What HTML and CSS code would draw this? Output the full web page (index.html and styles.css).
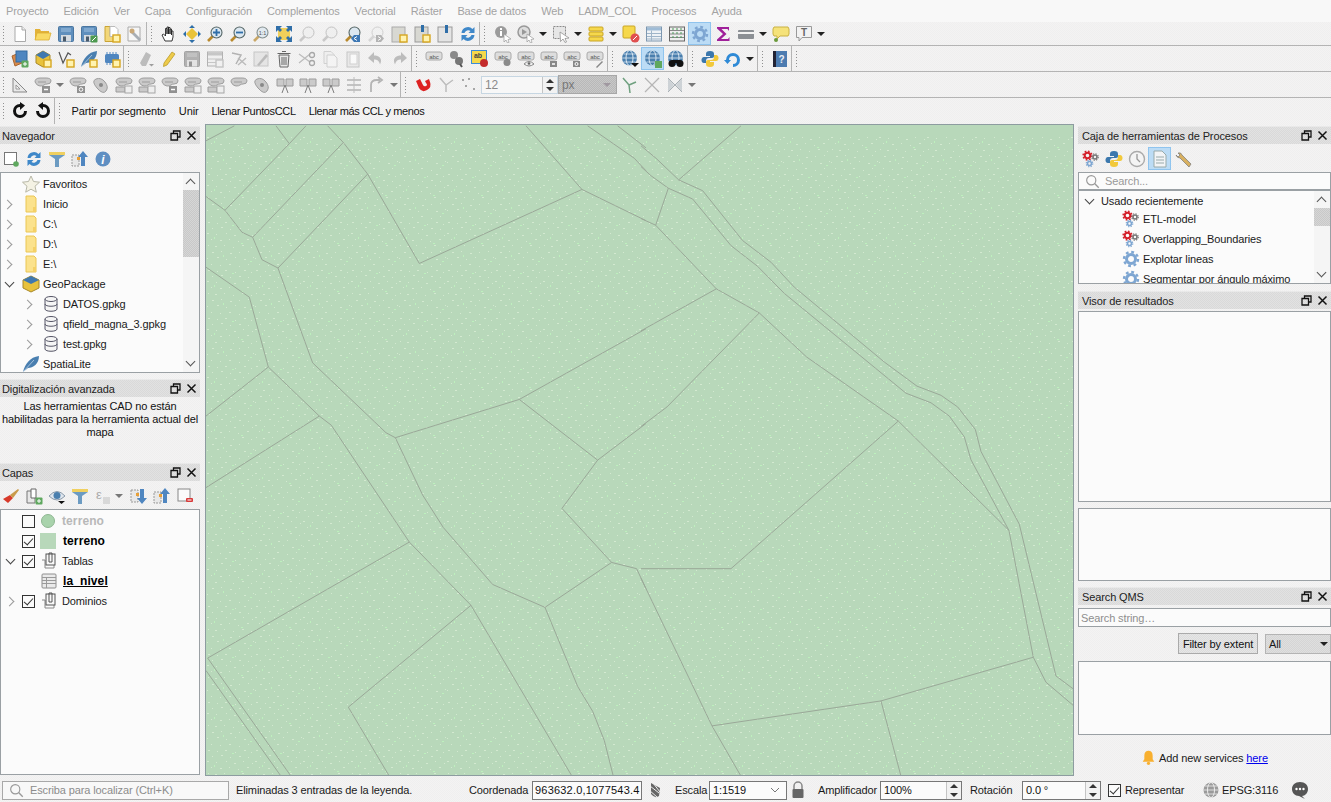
FILE: index.html
```html
<!DOCTYPE html>
<html lang="es">
<head>
  <meta charset="UTF-8" />
  <title>QGIS</title>
  <link rel="stylesheet" href="styles.css">
</head>
<body>

<!-- icon set -->
<svg class="defs" width="0" height="0">
  <symbol id="new" viewBox="0 0 18 18"><path d="M4 1.500h7l3.500 3.500v11.500H4z" fill="#fff" stroke="#a9a9a9"/><path d="M11 1.500V5h3.500" fill="#eee" stroke="#a9a9a9"/></symbol>
  <symbol id="open" viewBox="0 0 18 18"><path d="M1 15V4h5l1 2h8v3z" fill="#e2b239"/><path d="M1 15l2-7h14l-2 7z" fill="#f8d964" stroke="#dcae32" stroke-width=".8"/></symbol>
  <symbol id="save" viewBox="0 0 18 18"><rect x="1.500" y="1.500" width="15" height="15" rx="1" fill="#5f8fbd" stroke="#4a76a0"/><rect x="4" y="3" width="10" height="4" fill="#7fa8cf"/><rect x="4" y="10" width="10" height="6.500" fill="#d5dbe1"/><rect x="6" y="11.500" width="3" height="5" fill="#4a5a6a"/></symbol>
  <symbol id="badge" viewBox="0 0 18 18"><rect x="10" y="10" width="7" height="7" fill="#fff3b0" stroke="#d6a520" stroke-width="1.400"/></symbol>
  <symbol id="plus" viewBox="0 0 18 18"><rect x="10.500" y="10.500" width="7" height="7" rx="1" fill="#5fa85f"/><path d="M14 12v4M12 14h4" stroke="#fff"/></symbol>
  <symbol id="saveas" viewBox="0 0 18 18"><use href="#save"/><rect x="10.500" y="10.500" width="7" height="7" rx="1" fill="#4e9a50"/><path d="M12 16l4-4" stroke="#fff"/></symbol>
  <symbol id="layout" viewBox="0 0 18 18"><path d="M2 1.500h5v10h9v5H2z" fill="#f2d77a" stroke="#c9a435"/><path d="M7 1.500h5l3 3v7H7z" fill="#fff" stroke="#bbb"/><use href="#badge"/></symbol>
  <symbol id="layoutmgr" viewBox="0 0 18 18"><path d="M2 2h12v14H2z" fill="#f6f6f6" stroke="#aaa"/><path d="M7 6l8 8-2 2-8-8z" fill="#a7aeb5"/><circle cx="6" cy="6" r="2.500" fill="#c9a878"/></symbol>
  <symbol id="hand" viewBox="0 0 18 18"><path d="M5 16l-3-6 1.500-1 2 2V3.500h1.500V9V2h1.500v7V2.500H10V9V4h1.500v6V6H13v6l-1 4z" fill="#fff" stroke="#222" stroke-width=".9"/></symbol>
  <symbol id="pan" viewBox="0 0 18 18"><path d="M9 3l6 6-6 6-6-6z" fill="#e9c33a"/><path d="M9 0l3 3H6zM9 18l3-3H6zM0 9l3-3v6zM18 9l-3-3v6z" fill="#2f6ea8"/></symbol>
  <symbol id="mag" viewBox="0 0 18 18"><path d="M7 11l-5 5" stroke="#b98a2e" stroke-width="2.600"/><circle cx="10.500" cy="7.500" r="5.500" fill="#dbe7f0" stroke="#566" stroke-width="1.100"/></symbol>
  <symbol id="zin" viewBox="0 0 18 18"><use href="#mag"/><path d="M10.500 4v7M7 7.500h7" stroke="#2f6ea8" stroke-width="1.800"/></symbol>
  <symbol id="zout" viewBox="0 0 18 18"><use href="#mag"/><path d="M7 7.500h7" stroke="#2f6ea8" stroke-width="1.800"/></symbol>
  <symbol id="z11" viewBox="0 0 18 18"><g opacity=".7"><use href="#mag"/></g></symbol>
  <symbol id="zfull" viewBox="0 0 18 18"><path d="M3 3h12v12H3z" fill="#f0cf5a"/><path d="M1 1h6L5 3l2 2-2 2-2-2-2 2zM17 1h-6l2 2-2 2 2 2 2-2 2 2zM1 17h6l-2-2 2-2-2-2-2 2-2-2zM17 17h-6l2-2-2-2 2-2 2 2 2-2z" fill="#2f6ea8"/></symbol>
  <symbol id="zsel" viewBox="0 0 18 18"><g opacity=".55"><path d="M7 11l-5 5" stroke="#aaa" stroke-width="2.600"/><circle cx="10.500" cy="7.500" r="5.500" fill="#eee" stroke="#999"/></g></symbol>
  <symbol id="zlast" viewBox="0 0 18 18"><use href="#mag"/><path d="M16 10v7h-6l-3-3.500L10 10z" fill="#3d78b5"/><path d="M13 11.500l-3 2 3 2" stroke="#fff" fill="none"/></symbol>
  <symbol id="znext" viewBox="0 0 18 18"><g opacity=".7"><use href="#zsel"/><path d="M9 10h5l3 3.500-3 3.500H9z" fill="#9a9a9a"/><path d="M11 11.500l3 2-3 2" stroke="#fff" fill="none"/></g></symbol>
  <symbol id="bmnew" viewBox="0 0 18 18"><rect x="2" y="2" width="13" height="15" fill="#d8d8d2" stroke="#aaa"/><use href="#badge"/></symbol>
  <symbol id="bmshow" viewBox="0 0 18 18"><rect x="2" y="2" width="13" height="15" fill="#d8d8d2" stroke="#999"/><path d="M8 0h3v7H8z" fill="#2f6ea8"/><use href="#badge"/></symbol>
  <symbol id="bmlist" viewBox="0 0 18 18"><rect x="2" y="2" width="14" height="15" fill="#e4e4e4" stroke="#999"/><path d="M9 0h3v8H9z" fill="#2f6ea8"/></symbol>
  <symbol id="refresh" viewBox="0 0 18 18"><path d="M2.500 8a6.500 6.500 0 0 1 11-4l2-2v6h-6l2-2a4 4 0 0 0-6 2z" fill="#3f88c9"/><path d="M15.500 10a6.500 6.500 0 0 1-11 4l-2 2v-6h6l-2 2a4 4 0 0 0 6-2z" fill="#3f88c9"/></symbol>
  <symbol id="ident" viewBox="0 0 18 18"><circle cx="7" cy="7" r="6" fill="#9b9b9b"/><rect x="6" y="6" width="2" height="5" fill="#fff"/><rect x="6" y="3" width="2" height="2" fill="#fff"/><path d="M10 9l7 5-3 .5 1 3-1.500.5-1.500-3-2 2z" fill="#fff" stroke="#999" stroke-width=".7"/></symbol>
  <symbol id="action" viewBox="0 0 18 18"><circle cx="7" cy="7" r="6" fill="#ddd" stroke="#999" stroke-width="1.500"/><path d="M5 4l5 3-5 3z" fill="#999"/><path d="M10 9l7 5-3 .5 1 3-1.500.5-1.500-3-2 2z" fill="#fff" stroke="#999" stroke-width=".7"/></symbol>
  <symbol id="select" viewBox="0 0 18 18"><rect x="1.500" y="1.500" width="12" height="12" fill="#e6e6e6" stroke="#8a8a8a" stroke-dasharray="2 1"/><path d="M8 7l9 6-4 .5 1.500 3.500-1.500.5-2-3.500-2.500 2.500z" fill="#fff" stroke="#888" stroke-width=".7"/></symbol>
  <symbol id="stack" viewBox="0 0 18 18"><rect x="2" y="2" width="14" height="4" rx="1" fill="#f6d84c" stroke="#c9a525"/><rect x="2" y="7" width="14" height="4" rx="1" fill="#f6d84c" stroke="#c9a525"/><rect x="2" y="12" width="14" height="4" rx="1" fill="#f6d84c" stroke="#c9a525"/></symbol>
  <symbol id="desel" viewBox="0 0 18 18"><rect x="1" y="1" width="12" height="12" rx="1" fill="#f6d84c" stroke="#c9a525"/><circle cx="13" cy="13" r="4.500" fill="#e05050"/><path d="M11 15l4-4" stroke="#fff"/></symbol>
  <symbol id="attr" viewBox="0 0 18 18"><rect x="1.500" y="2" width="15" height="14" fill="#eef2f6" stroke="#7d97b0"/><rect x="2" y="2.500" width="14" height="3" fill="#9fbcd6"/><path d="M2 8.500h14M2 11.500h14M2 14h14M6.500 5.500V16" stroke="#9fb5c9"/></symbol>
  <symbol id="calc" viewBox="0 0 18 18"><rect x="1.500" y="2" width="15" height="14" fill="#eee" stroke="#666"/><path d="M2 5.500h14M2 9h14M2 12.500h14" stroke="#888"/><path d="M5 3v12M9 3v12M13 3v12" stroke="#4b9a58" stroke-dasharray="2 2"/></symbol>
  <symbol id="gear" viewBox="0 0 18 18"><circle cx="9" cy="9" r="4.500" fill="none" stroke="#7ea6d2" stroke-width="3"/><circle cx="9" cy="9" r="7" fill="none" stroke="#7ea6d2" stroke-width="2.400" stroke-dasharray="2.800 2.700"/></symbol>
  <symbol id="rgear" viewBox="0 0 18 18"><circle cx="5.500" cy="5.500" r="2.800" fill="none" stroke="#d4202a" stroke-width="2"/><circle cx="5.500" cy="5.500" r="4.400" fill="none" stroke="#d4202a" stroke-width="1.500" stroke-dasharray="1.700 1.750"/><circle cx="13" cy="7" r="2" fill="none" stroke="#777" stroke-width="1.600"/><circle cx="13" cy="7" r="3.300" fill="none" stroke="#777" stroke-width="1.100" stroke-dasharray="1.300 1.300"/><circle cx="7.500" cy="13.500" r="2" fill="none" stroke="#7ea6d2" stroke-width="1.600"/><circle cx="7.500" cy="13.500" r="3.300" fill="none" stroke="#7ea6d2" stroke-width="1.100" stroke-dasharray="1.300 1.300"/></symbol>
  <symbol id="sigma" viewBox="0 0 18 18"><path d="M3 2h12v4l-1.500-2H7.500l5 5-5.500 5h7l1.500-2v4H3v-1.500L9 9 3 3.500z" fill="#a0209a"/></symbol>
  <symbol id="measure" viewBox="0 0 18 18"><rect x="1" y="5" width="16" height="9" rx="1" fill="#8b8f94"/><rect x="1" y="7" width="16" height="2" fill="#f2f2f2"/></symbol>
  <symbol id="tip" viewBox="0 0 18 18"><path d="M2 2h14l1 2v5l-1 2H8l-3 3v-3H2l-1-2V4z" fill="#f5e27a" stroke="#c9b143"/><circle cx="4" cy="15" r="2" fill="#6a9a3a"/></symbol>
  <symbol id="textann" viewBox="0 0 18 18"><path d="M1.500 1.500h15v11H7l-3 3.500v-3.500H1.500z" fill="#f2f2f2" stroke="#999"/></symbol>
  <symbol id="dsm" viewBox="0 0 18 18"><path d="M1 6l7-3 3 10-7 3z" fill="#d98a4a" stroke="#a8642e"/><rect x="5" y="1" width="11" height="11" fill="#4f86c0" stroke="#356a9f"/><use href="#plus"/></symbol>
  <symbol id="gpkg" viewBox="0 0 18 18"><path d="M9 1l7 4v8l-7 4-7-4V5z" fill="#e8c23c" stroke="#a8892a"/><path d="M9 1l7 4-7 4-7-4z" fill="#3f78b0"/><use href="#badge"/></symbol>
  <symbol id="gpkgtree" viewBox="0 0 18 18"><path d="M9 1l8 4v8l-8 4-8-4V5z" fill="#e8c23c" stroke="#a8892a"/><path d="M9 1l8 4-8 4-8-4z" fill="#3f78b0"/></symbol>
  <symbol id="newvec" viewBox="0 0 18 18"><path d="M2 2l4 11 5-10 3 2" fill="none" stroke="#555" stroke-width="1.200"/><use href="#badge"/></symbol>
  <symbol id="feather" viewBox="0 0 18 18"><path d="M1 17C3 9 8 2 17 1c0 8-6 12-11 12z" fill="#4a7fb0"/><path d="M1 17l11-12" stroke="#cfe0ef" stroke-width=".7"/></symbol>
  <symbol id="feathernew" viewBox="0 0 18 18"><use href="#feather"/><use href="#badge"/></symbol>
  <symbol id="chip" viewBox="0 0 18 18"><rect x="2" y="4" width="14" height="9" rx="1.500" fill="#4f86c0"/><path d="M4 2v14M7 2v14M10 2v14M13 2v14" stroke="#4f86c0" stroke-dasharray="2 9"/><use href="#badge"/></symbol>
  <symbol id="edits" viewBox="0 0 18 18"><path d="M3 13L9 2l5 3-5 11H5z" fill="#9a9a9a"/><path d="M12 14h5l-2.500 2.500z" fill="#666"/></symbol>
  <symbol id="pencil" viewBox="0 0 18 18"><path d="M4 13L12 2l3 2-8 11-3.500 1.500z" fill="#eecb4a" stroke="#b99a2a" stroke-width=".8"/></symbol>
  <symbol id="edtable" viewBox="0 0 18 18"><rect x="1.500" y="2" width="15" height="14" fill="#eee" stroke="#888"/><rect x="2" y="2.500" width="14" height="3" fill="#aaa"/><path d="M2 9h14M2 12.500h14" stroke="#aaa"/><use href="#badge"/></symbol>
  <symbol id="addseg" viewBox="0 0 18 18"><path d="M3 3l9 2-5 9" fill="none" stroke="#888" stroke-width="1.500"/><path d="M9 8l8 7M17 8l-8 7" stroke="#8a9aa8" stroke-width="1.500"/></symbol>
  <symbol id="edline" viewBox="0 0 18 18"><rect x="2" y="2" width="14" height="14" fill="#ddd" stroke="#aaa"/><path d="M5 15L14 4l2 2-9 10z" fill="#999"/></symbol>
  <symbol id="trash" viewBox="0 0 18 18"><path d="M4 5h10l-1 12H5z" fill="#e8e8e8" stroke="#666"/><path d="M2.500 3.500h13M7 1.500h4M7 7v8M9 7v8M11 7v8" stroke="#666"/></symbol>
  <symbol id="cut" viewBox="0 0 18 18"><path d="M1 4l11 8M1 13l11-9" stroke="#999" stroke-width="1.300"/><circle cx="14" cy="13" r="2.500" fill="none" stroke="#777" stroke-width="1.300"/><circle cx="14" cy="5" r="2.500" fill="none" stroke="#777" stroke-width="1.300"/></symbol>
  <symbol id="copy" viewBox="0 0 18 18"><path d="M3 1.500h7l3 3v9H3z" fill="#eee" stroke="#bbb"/><path d="M6 5h7l3 3v9H6z" fill="#f6f6f6" stroke="#bbb"/></symbol>
  <symbol id="paste" viewBox="0 0 18 18"><rect x="3" y="2" width="12" height="15" fill="#e4e4e4" stroke="#aaa"/><rect x="6" y="4" width="7" height="10" fill="#fff" stroke="#bbb"/></symbol>
  <symbol id="undo" viewBox="0 0 18 18"><path d="M7 2L1 8l6 5V9.500c3 0 5 1 6 5 3-6-1-9-6-9z" fill="#9a9a9a"/></symbol>
  <symbol id="redo" viewBox="0 0 18 18"><path d="M11 2l6 6-6 5V9.500c-3 0-5 1-6 5-3-6 1-9 6-9z" fill="#9a9a9a"/></symbol>
  <symbol id="abc" viewBox="0 0 18 18"><rect x="1" y="2" width="16" height="8" rx="2" fill="#ddd" stroke="#aaa"/></symbol>
  <symbol id="abcpin" viewBox="0 0 18 18"><use href="#abc"/><circle cx="13" cy="12.500" r="3.500" fill="#8a8a8a"/></symbol>
  <symbol id="abceye" viewBox="0 0 18 18"><use href="#abc"/><path d="M7 14q5-5 10 0-5 4-10 0z" fill="#eee" stroke="#888"/><circle cx="12" cy="13.500" r="1.300" fill="#666"/></symbol>
  <symbol id="abcmove" viewBox="0 0 18 18"><use href="#abc"/><path d="M10 11h7v6h-7z" fill="#888"/><path d="M12 14h3" stroke="#fff" stroke-width="1.500"/></symbol>
  <symbol id="abcrot" viewBox="0 0 18 18"><use href="#abc"/><rect x="10" y="11" width="7" height="6" fill="#888"/><circle cx="13.500" cy="14" r="1.500" fill="none" stroke="#fff"/></symbol>
  <symbol id="abcedit" viewBox="0 0 18 18"><use href="#abc"/><path d="M10 17l6-6 1 1-6 6z" fill="#888"/></symbol>
  <symbol id="pins" viewBox="0 0 18 18"><circle cx="6" cy="5" r="4" fill="#8a8a8a"/><circle cx="11" cy="11" r="4" fill="#777"/><path d="M12 14l2 3" stroke="#555" stroke-width="2"/></symbol>
  <symbol id="labelactive" viewBox="0 0 18 18"><rect x=".5" y=".5" width="15" height="13" fill="#f5d94c" stroke="#3d8cd6"/><circle cx="13" cy="13" r="4" fill="#c42b2b"/></symbol>
  <symbol id="globe" viewBox="0 0 18 18"><circle cx="8.500" cy="8" r="7.500" fill="#4a7fae"/><ellipse cx="8.500" cy="8" rx="3.500" ry="7.500" fill="none" stroke="#dce8f2"/><path d="M1 8h15M2.500 4h12M2.500 12h12" stroke="#dce8f2" stroke-width=".8"/></symbol>
  <symbol id="wmsdown" viewBox="0 0 18 18"><use href="#globe"/><path d="M10 13h8l-4 4z" fill="#111"/></symbol>
  <symbol id="wmsgreen" viewBox="0 0 18 18"><use href="#globe"/><rect x="11" y="11" width="7" height="7" fill="#5fa85f"/></symbol>
  <symbol id="binoc" viewBox="0 0 18 18"><use href="#globe"/><circle cx="5" cy="13.500" r="3.500" fill="#111"/><circle cx="13" cy="13.500" r="3.500" fill="#111"/><rect x="5" y="10" width="8" height="3" fill="#111"/></symbol>
  <symbol id="python" viewBox="0 0 18 18"><path d="M9 1c-3 0-4 1-4 3v2h4v1H3c-2 0-2.500 2-2.500 3s.5 3 2.500 3h2v-2c0-2 1-3 3-3h3c1.500 0 2-1 2-2V4c0-2-1-3-4-3z" fill="#3c78ad"/><path d="M9 17c3 0 4-1 4-3v-2H9v-1h6c2 0 2.500-2 2.500-3s-.5-3-2.500-3h-2v2c0 2-1 3-3 3H7c-1.500 0-2 1-2 2v2c0 2 1 3 4 3z" fill="#f2c93b"/></symbol>
  <symbol id="update" viewBox="0 0 18 18"><path d="M2 10a7 7 0 1 1 7 7v-3a4 4 0 1 0-4-4h2l-3.500 4L0 10z" fill="#2f8ad6"/></symbol>
  <symbol id="help" viewBox="0 0 18 18"><rect x="2" y="1" width="14" height="16" fill="#4c7bb0"/><rect x="2" y="1" width="3" height="16" fill="#223"/></symbol>
  <symbol id="ruler" viewBox="0 0 18 18"><path d="M2 2l14 14H2z" fill="#e8e8e8" stroke="#777"/><path d="M5 9l4 4H5z" fill="#fff" stroke="#888"/></symbol>
  <symbol id="blob" viewBox="0 0 18 18"><path d="M1 6q0-4 5-4h6q5 0 5 3t-4 3q-2 0-3 1t-4 1-5-4z" fill="#c4c4c4" stroke="#8e8e8e"/><path d="M4 6h8" stroke="#8e8e8e"/></symbol>
  <symbol id="blobmove" viewBox="0 0 18 18"><use href="#blob"/><rect x="8" y="10" width="8" height="7" fill="#808080"/><path d="M10 13.500h4" stroke="#fff" stroke-width="1.500"/></symbol>
  <symbol id="blobrot" viewBox="0 0 18 18"><use href="#blob"/><rect x="8" y="10" width="8" height="7" fill="#808080"/><circle cx="12" cy="13.500" r="1.800" fill="none" stroke="#fff"/></symbol>
  <symbol id="blobdot" viewBox="0 0 18 18"><path d="M4 3q5-2 9 3t1 9-9-3-1-9z" fill="#c4c4c4" stroke="#8e8e8e"/><circle cx="9" cy="9" r="2" fill="#777"/></symbol>
  <symbol id="blobadd" viewBox="0 0 18 18"><use href="#blob"/><path d="M1 11h9v5H1z" fill="#c4c4c4" stroke="#8e8e8e"/><rect x="10" y="10" width="7" height="7" fill="#eee" stroke="#999"/></symbol>
  <symbol id="blobsplit" viewBox="0 0 18 18"><path d="M1 3h7v7H1zM10 3h7v7h-7z" fill="#c4c4c4" stroke="#8e8e8e"/><path d="M9 9l-3 8M9 9l3 8" stroke="#666"/></symbol>
  <symbol id="lines" viewBox="0 0 18 18"><path d="M2 4h14M2 9h14M2 14h14" stroke="#bbb" stroke-width="2"/><path d="M9 1v16" stroke="#9bb"/></symbol>
  <symbol id="curve" viewBox="0 0 18 18"><path d="M3 16V9q0-5 6-5h3M10 1l4 3-4 3" fill="none" stroke="#aaa" stroke-width="1.800"/></symbol>
  <symbol id="magnet" viewBox="0 0 18 18"><path d="M2 5l4-2 3 6q1 2 3 1t0-3l-1-2 4-2 1 3q2 5-3 8t-8-2z" fill="#dd2222"/></symbol>
  <symbol id="traceline" viewBox="0 0 18 18"><path d="M3 2l6 7 7-5M9 9v7" fill="none" stroke="#9bb" stroke-width="1.500"/></symbol>
  <symbol id="snapdots" viewBox="0 0 18 18"><g fill="#9a9a9a"><rect x="2" y="3" width="2" height="2"/><rect x="8" y="2" width="2" height="2"/><rect x="5" y="9" width="2" height="2"/><rect x="13" y="12" width="2" height="2"/></g></symbol>
  <symbol id="tripod" viewBox="0 0 18 18"><path d="M9 9L3 2M9 9l7-3M9 9l1 8" stroke="#6fa07f" stroke-width="1.500"/></symbol>
  <symbol id="cross" viewBox="0 0 18 18"><path d="M2 2l14 14M16 2L2 16" stroke="#b5b5b5" stroke-width="1.300"/></symbol>
  <symbol id="crossb" viewBox="0 0 18 18"><path d="M2 2l6 7-6 7zM16 2l-6 7 6 7z" fill="#cdd2d6"/><path d="M2 2l14 14M16 2L2 16" stroke="#a9b0b5"/></symbol>
  <symbol id="cw" viewBox="0 0 18 18"><path d="M9 2a7 7 0 1 0 7 7h-3a4 4 0 1 1-4-4v3l5-4.500L9 0z" fill="#111"/></symbol>
  <symbol id="ccw" viewBox="0 0 18 18"><path d="M9 2a7 7 0 1 1-7 7h3a4 4 0 1 0 4-4v3L4 3.500 9 0z" fill="#111"/></symbol>
  <symbol id="newdoc" viewBox="0 0 18 18"><rect x="2.500" y="2.500" width="12" height="12" fill="#fff" stroke="#777"/><circle cx="14" cy="14" r="2.800" fill="#5fa85f"/></symbol>
  <symbol id="filter" viewBox="0 0 18 18"><path d="M1 2h16v3l-6 4v8H7V9L1 5z" fill="#6c9bc2"/><rect x="1" y="2" width="16" height="3" fill="#f0d060"/></symbol>
  <symbol id="collapse" viewBox="0 0 18 18"><path d="M1 5h7v11H1z" fill="#e8e8e8" stroke="#999" stroke-dasharray="2 1"/><rect x="6" y="7" width="3" height="3" fill="#e8a038"/><path d="M12 1l5 6h-3v9h-4V7H7z" fill="#4f86c0"/></symbol>
  <symbol id="expand" viewBox="0 0 18 18"><path d="M1 3h7v12H1z" fill="#e8e8e8" stroke="#999" stroke-dasharray="2 1"/><rect x="6" y="6" width="3" height="3" fill="#e8a038"/><path d="M12 17l5-6h-3V2h-4v9H7z" fill="#4f86c0"/></symbol>
  <symbol id="info" viewBox="0 0 18 18"><circle cx="9" cy="9" r="7.500" fill="#5f8fc2"/></symbol>
  <symbol id="star" viewBox="0 0 18 18"><path d="M9 1l2.500 5.500 6 .7-4.500 4 1.300 6L9 14.200 3.700 17.200 5 11.200.5 7.200l6-.7z" fill="#f4f2e4" stroke="#b8b8a8"/></symbol>
  <symbol id="folder" viewBox="0 0 18 18"><path d="M4 1h8l2 2v14H4z" fill="#fbe28c" stroke="#eac654"/><path d="M11 12h3v5h-3z" fill="#f4d066"/></symbol>
  <symbol id="db" viewBox="0 0 18 18"><path d="M3 4v10c0 3 12 3 12 0V4" fill="#f5f5f5" stroke="#556"/><ellipse cx="9" cy="4" rx="6" ry="2.500" fill="#f5f5f5" stroke="#556"/><path d="M3 9c0 3 12 3 12 0" fill="none" stroke="#556"/></symbol>
  <symbol id="brush" viewBox="0 0 18 18"><path d="M1 12l7-4 3 3-5 5z" fill="#d83a2a"/><path d="M8 8l8-6 1 1-6 8z" fill="#c89a4a"/></symbol>
  <symbol id="addgroup" viewBox="0 0 18 18"><path d="M2 4h8v12H2z" fill="#e8e8e8" stroke="#777"/><path d="M6 2h5v9H6z" fill="#fff" stroke="#666"/><use href="#plus"/></symbol>
  <symbol id="eye" viewBox="0 0 18 18"><path d="M1 9q8-9 16 0-8 8-16 0z" fill="#dfe6ee" stroke="#8a9aaa"/><circle cx="9" cy="8.500" r="3.500" fill="#4a7fae"/><path d="M10 14h7l-3.500 3z" fill="#111"/></symbol>
  <symbol id="eps" viewBox="0 0 18 18"><rect x="9" y="10" width="7" height="7" fill="#d8d8d8"/></symbol>
  <symbol id="remove" viewBox="0 0 18 18"><rect x="2" y="2" width="12" height="12" fill="#fbfbfb" stroke="#888"/><rect x="10" y="11" width="7" height="4" rx="1" fill="#d83a3a"/><path d="M11.500 13h4" stroke="#fff"/></symbol>
  <symbol id="clock" viewBox="0 0 18 18"><circle cx="9" cy="9" r="7.500" fill="#f4f4f4" stroke="#aaa" stroke-width="1.400"/><path d="M9 4v5l3 3" fill="none" stroke="#999" stroke-width="1.300"/></symbol>
  <symbol id="scroll" viewBox="0 0 18 18"><path d="M3 1h8l4 4v12H3z" fill="#f2f4f6" stroke="#9aa"/><path d="M5 7h8M5 10h8M5 13h8" stroke="#9aa"/></symbol>
  <symbol id="wrench" viewBox="0 0 18 18"><path d="M2 5l2 2 2-2-2-2q3-1 4 2l9 9-2 3-9-9q-3 0-4-3z" fill="#d8b060" stroke="#777" stroke-width=".7"/></symbol>
  <symbol id="group" viewBox="0 0 18 18"><path d="M2 8h3v8h9v-3" fill="none" stroke="#888"/><rect x="6" y="2" width="9" height="11" fill="#f8f8f8" stroke="#555"/><path d="M9 2V1h3v1M9 2v8h3V2" fill="none" stroke="#555"/></symbol>
  <symbol id="tablelayer" viewBox="0 0 18 18"><rect x="2" y="2" width="14" height="14" rx="1" fill="#eaeaea" stroke="#8e8e8e"/><path d="M2 5.500h14M2 8.500h14M2 11.500h14M6.500 5.500V16" stroke="#9a9a9a"/></symbol>
  <symbol id="search" viewBox="0 0 18 18"><circle cx="7.500" cy="7.500" r="5.500" fill="none" stroke="#999" stroke-width="1.400"/><path d="M11.500 11.500l5 5" stroke="#999" stroke-width="1.600"/></symbol>
  <symbol id="mouse" viewBox="0 0 18 18"><path d="M5 2l9 5-1 8q-4 3-8-2z" fill="#666"/><path d="M4 5l9 7M3 9l8 7M7 2l7 9" stroke="#eee"/></symbol>
  <symbol id="lock" viewBox="0 0 18 18"><path d="M5 8V5a4 4 0 0 1 8 0v3" fill="none" stroke="#888" stroke-width="1.500"/><rect x="3.500" y="8" width="11" height="9" rx="1" fill="#666"/></symbol>
  <symbol id="crs" viewBox="0 0 18 18"><circle cx="9" cy="9" r="7.500" fill="#9a9a9a"/><ellipse cx="9" cy="9" rx="3.500" ry="7.500" fill="none" stroke="#eee"/><path d="M1.500 9h15M3 5h12M3 13h12" stroke="#eee" stroke-width=".8"/></symbol>
  <symbol id="chat" viewBox="0 0 18 18"><path d="M9 1c5 0 8 3 8 7s-3 7-6 7l3 3-6-3c-4 0-7-3-7-7s3-7 8-7z" fill="#555"/><circle cx="5.500" cy="8" r="1.200" fill="#fff"/><circle cx="9" cy="8" r="1.200" fill="#fff"/><circle cx="12.500" cy="8" r="1.200" fill="#fff"/></symbol>
  <symbol id="bell" viewBox="0 0 18 18"><path d="M9 1c3 0 5 2 5 6v4l2 3H2l2-3V7c0-4 2-6 5-6z" fill="#f8b030"/><circle cx="9" cy="16" r="2" fill="#f8b030"/></symbol>
  <symbol id="dockfloat" viewBox="0 0 11 11"><path d="M3.500 3V1h6.500v6H8M1 3.500h6.500V10H1z" fill="none" stroke="#111" stroke-width="1.300"/></symbol>
  <symbol id="dockclose" viewBox="0 0 11 11"><path d="M1.500 1.500l8 8M9.500 1.500l-8 8" stroke="#111" stroke-width="1.500"/></symbol>
</svg>

<div class="menubar">
  <span>Proyecto</span><span>Edición</span><span>Ver</span><span>Capa</span><span>Configuración</span><span>Complementos</span><span>Vectorial</span><span>Ráster</span><span>Base de datos</span><span>Web</span><span>LADM_COL</span><span>Procesos</span><span>Ayuda</span>
</div>

<div class="toolrow row1">
  <div class="tgroup line">
    <i class="grip tight"></i>
    <b class="tb"><svg class="ico"><use href="#new"/></svg></b>
    <b class="tb"><svg class="ico"><use href="#open"/></svg></b>
    <b class="tb"><svg class="ico"><use href="#save"/></svg></b>
    <b class="tb"><svg class="ico"><use href="#saveas"/></svg></b>
    <b class="tb"><svg class="ico"><use href="#layout"/></svg></b>
    <b class="tb"><svg class="ico"><use href="#layoutmgr"/></svg></b>
  </div>
  <div class="tgroup line">
    <i class="grip"></i>
    <b class="tb"><svg class="ico"><use href="#hand"/></svg></b>
    <b class="tb"><svg class="ico"><use href="#pan"/></svg></b>
    <b class="tb"><svg class="ico"><use href="#zin"/></svg></b>
    <b class="tb"><svg class="ico"><use href="#zout"/></svg></b>
    <b class="tb"><svg class="ico"><use href="#z11"/><text x="10.500" y="9.500" class="it t-11">1:1</text></svg></b>
    <b class="tb"><svg class="ico"><use href="#zfull"/></svg></b>
    <b class="tb"><svg class="ico"><use href="#zsel"/></svg></b>
    <b class="tb"><svg class="ico"><use href="#zsel"/></svg></b>
    <b class="tb"><svg class="ico"><use href="#zlast"/></svg></b>
    <b class="tb"><svg class="ico"><use href="#znext"/></svg></b>
    <b class="tb"><svg class="ico"><use href="#bmnew"/></svg></b>
    <b class="tb"><svg class="ico"><use href="#bmshow"/></svg></b>
    <b class="tb"><svg class="ico"><use href="#bmlist"/></svg></b>
    <b class="tb"><svg class="ico"><use href="#refresh"/></svg></b>
  </div>
  <div class="tgroup">
    <i class="grip wide"></i>
    <b class="tb"><svg class="ico"><use href="#ident"/></svg></b>
    <b class="tb"><svg class="ico"><use href="#action"/></svg></b><u class="drop"></u>
    <b class="tb"><svg class="ico"><use href="#select"/></svg></b><u class="drop"></u>
    <b class="tb"><svg class="ico"><use href="#stack"/></svg></b><u class="drop"></u>
    <b class="tb"><svg class="ico"><use href="#desel"/></svg></b>
    <b class="tb"><svg class="ico"><use href="#attr"/></svg></b>
    <b class="tb"><svg class="ico"><use href="#calc"/></svg></b>
    <b class="tb on"><svg class="ico"><use href="#gear"/></svg></b>
    <b class="tb"><svg class="ico"><use href="#sigma"/></svg></b>
    <b class="tb"><svg class="ico"><use href="#measure"/></svg></b><u class="drop"></u>
    <b class="tb"><svg class="ico"><use href="#tip"/></svg></b>
    <b class="tb"><svg class="ico"><use href="#textann"/><text x="9" y="10.500" class="it t-t">T</text></svg></b><u class="drop"></u>
  </div>
</div>

<div class="toolrow row2">
  <div class="tgroup line">
    <i class="grip tight"></i>
    <b class="tb"><svg class="ico"><use href="#dsm"/></svg></b>
    <b class="tb"><svg class="ico"><use href="#gpkg"/></svg></b>
    <b class="tb"><svg class="ico"><use href="#newvec"/></svg></b>
    <b class="tb"><svg class="ico"><use href="#feathernew"/></svg></b>
    <b class="tb"><svg class="ico"><use href="#chip"/></svg></b>
  </div>
  <div class="tgroup line pad">
    <i class="grip"></i>
    <b class="tb off"><svg class="ico"><use href="#edits"/></svg></b>
    <b class="tb"><svg class="ico"><use href="#pencil"/></svg></b>
    <b class="tb off"><svg class="ico"><use href="#save"/></svg></b>
    <b class="tb off"><svg class="ico"><use href="#edtable"/></svg></b>
    <b class="tb off"><svg class="ico"><use href="#addseg"/></svg></b>
    <b class="tb off"><svg class="ico"><use href="#edline"/></svg></b>
    <b class="tb"><svg class="ico"><use href="#trash"/></svg></b>
    <b class="tb off"><svg class="ico"><use href="#cut"/></svg></b>
    <b class="tb off"><svg class="ico"><use href="#copy"/></svg></b>
    <b class="tb off"><svg class="ico"><use href="#paste"/></svg></b>
    <b class="tb off"><svg class="ico"><use href="#undo"/></svg></b>
    <b class="tb off"><svg class="ico"><use href="#redo"/></svg></b>
  </div>
  <div class="tgroup line pad">
    <i class="grip"></i>
    <b class="tb"><svg class="ico"><use href="#abc"/><text x="9" y="8.500" class="it">abc</text></svg></b>
    <b class="tb"><svg class="ico"><use href="#pins"/></svg></b>
    <b class="tb"><svg class="ico"><use href="#labelactive"/><text x="7" y="8" class="it t-ab">ab</text></svg></b>
    <b class="tb"><svg class="ico"><use href="#abcpin"/><text x="9" y="8.500" class="it">abc</text></svg></b>
    <b class="tb"><svg class="ico"><use href="#abceye"/><text x="9" y="8.500" class="it">abc</text></svg></b>
    <b class="tb"><svg class="ico"><use href="#abcmove"/><text x="9" y="8.500" class="it">abc</text></svg></b>
    <b class="tb"><svg class="ico"><use href="#abcrot"/><text x="9" y="8.500" class="it">abc</text></svg></b>
    <b class="tb"><svg class="ico"><use href="#abcedit"/><text x="9" y="8.500" class="it">abc</text></svg></b>
  </div>
  <div class="tgroup line">
    <i class="grip"></i>
    <b class="tb"><svg class="ico"><use href="#wmsdown"/></svg></b>
    <b class="tb on"><svg class="ico"><use href="#wmsgreen"/></svg></b>
    <b class="tb"><svg class="ico"><use href="#binoc"/></svg></b>
  </div>
  <div class="tgroup line pad">
    <i class="grip"></i>
    <b class="tb"><svg class="ico"><use href="#python"/></svg></b>
    <b class="tb"><svg class="ico"><use href="#update"/></svg></b><u class="drop"></u>
  </div>
  <div class="tgroup line">
    <i class="grip"></i>
    <b class="tb"><svg class="ico"><use href="#help"/><text x="10.500" y="13" class="it t-help">?</text></svg></b>
  </div>
  <div class="tgroup"><i class="grip"></i></div>
</div>

<div class="toolrow row3">
  <div class="tgroup line">
    <i class="grip tight"></i>
    <b class="tb off"><svg class="ico"><use href="#ruler"/></svg></b>
    <b class="tb off"><svg class="ico"><use href="#blobmove"/></svg></b><u class="drop grey"></u>
    <b class="tb off"><svg class="ico"><use href="#blobrot"/></svg></b>
    <b class="tb off"><svg class="ico"><use href="#blobdot"/></svg></b>
    <b class="tb off"><svg class="ico"><use href="#blobadd"/></svg></b>
    <b class="tb off"><svg class="ico"><use href="#blobadd"/></svg></b>
    <b class="tb off"><svg class="ico"><use href="#blobmove"/></svg></b>
    <b class="tb off"><svg class="ico"><use href="#blobadd"/></svg></b>
    <b class="tb off"><svg class="ico"><use href="#blobadd"/></svg></b>
    <b class="tb off"><svg class="ico"><use href="#blob"/></svg></b>
    <b class="tb off"><svg class="ico"><use href="#blobdot"/></svg></b>
    <b class="tb off"><svg class="ico"><use href="#blobsplit"/></svg></b>
    <b class="tb off"><svg class="ico"><use href="#blobsplit"/></svg></b>
    <b class="tb off"><svg class="ico"><use href="#blobsplit"/></svg></b>
    <b class="tb off"><svg class="ico"><use href="#lines"/></svg></b>
    <b class="tb off"><svg class="ico"><use href="#curve"/></svg></b><u class="drop grey"></u>
  </div>
  <div class="tgroup">
    <i class="grip"></i>
    <b class="tb"><svg class="ico"><use href="#magnet"/></svg></b>
    <b class="tb off"><svg class="ico"><use href="#traceline"/></svg></b>
    <b class="tb off"><svg class="ico"><use href="#snapdots"/></svg></b>
    <div class="snap-spin"><span>12</span><em class="spin"></em></div>
    <div class="snap-unit"><span>px</span><u class="drop pale"></u></div>
    <b class="tb"><svg class="ico"><use href="#tripod"/></svg></b>
    <b class="tb"><svg class="ico"><use href="#cross"/></svg></b>
    <b class="tb"><svg class="ico"><use href="#crossb"/></svg></b><u class="drop grey"></u>
  </div>
</div>

<div class="toolrow row4">
  <div class="tgroup line">
    <i class="grip tight"></i>
    <b class="tb"><svg class="ico"><use href="#cw"/></svg></b>
    <b class="tb"><svg class="ico"><use href="#ccw"/></svg></b>
  </div>
  <div class="tgroup">
    <i class="grip"></i>
    <span class="act">Partir por segmento</span><span class="act">Unir</span><span class="act narrow">Llenar PuntosCCL</span><span class="act narrow">Llenar más CCL y menos</span>
  </div>
</div>

<div class="main">

  <aside class="dock left">
    <section class="panel">
      <div class="dock-title"><span>Navegador</span><svg class="dock-btn"><use href="#dockfloat"/></svg><svg class="dock-btn"><use href="#dockclose"/></svg></div>
      <div class="dock-bar">
        <svg class="ico"><use href="#newdoc"/></svg>
        <svg class="ico"><use href="#refresh"/></svg>
        <svg class="ico"><use href="#filter"/></svg>
        <svg class="ico"><use href="#collapse"/></svg>
        <svg class="ico"><use href="#info"/><text x="9" y="13.500" class="it t-i">i</text></svg>
      </div>
      <div class="tree nav-tree">
        <div class="rows">
          <div class="row"><i class="tw"></i><svg class="ico"><use href="#star"/></svg><span>Favoritos</span></div>
          <div class="row"><i class="tw r"></i><svg class="ico"><use href="#folder"/></svg><span>Inicio</span></div>
          <div class="row"><i class="tw r"></i><svg class="ico"><use href="#folder"/></svg><span>C:\</span></div>
          <div class="row"><i class="tw r"></i><svg class="ico"><use href="#folder"/></svg><span>D:\</span></div>
          <div class="row"><i class="tw r"></i><svg class="ico"><use href="#folder"/></svg><span>E:\</span></div>
          <div class="row"><i class="tw d"></i><svg class="ico"><use href="#gpkgtree"/></svg><span>GeoPackage</span></div>
          <div class="row sub"><i class="tw r"></i><svg class="ico"><use href="#db"/></svg><span>DATOS.gpkg</span></div>
          <div class="row sub"><i class="tw r"></i><svg class="ico"><use href="#db"/></svg><span>qfield_magna_3.gpkg</span></div>
          <div class="row sub"><i class="tw r"></i><svg class="ico"><use href="#db"/></svg><span>test.gpkg</span></div>
          <div class="row"><i class="tw"></i><svg class="ico"><use href="#feather"/></svg><span>SpatiaLite</span></div>
        </div>
        <div class="scrollbar"><i class="up"></i><i class="thumb nav-thumb"></i><i class="rest"></i><i class="down"></i></div>
      </div>
    </section>

    <section class="panel cad">
      <div class="dock-title"><span>Digitalización avanzada</span><svg class="dock-btn"><use href="#dockfloat"/></svg><svg class="dock-btn"><use href="#dockclose"/></svg></div>
      <p class="cad-msg">Las herramientas CAD no están habilitadas para la herramienta actual del mapa</p>
    </section>

    <section class="panel layers">
      <div class="dock-title"><span>Capas</span><svg class="dock-btn"><use href="#dockfloat"/></svg><svg class="dock-btn"><use href="#dockclose"/></svg></div>
      <div class="dock-bar layer-bar">
        <svg class="ico"><use href="#brush"/></svg>
        <svg class="ico"><use href="#addgroup"/></svg>
        <svg class="ico"><use href="#eye"/></svg>
        <svg class="ico"><use href="#filter"/></svg>
        <svg class="ico"><use href="#eps"/><text x="2" y="12" class="it t-eps">ε</text></svg><u class="drop grey"></u>
        <svg class="ico"><use href="#expand"/></svg>
        <svg class="ico"><use href="#collapse"/></svg>
        <svg class="ico"><use href="#remove"/></svg>
      </div>
      <div class="tree layer-tree">
        <div class="lrow"><i class="tw"></i><i class="check"></i><i class="sym-circle"></i><span class="dim">terreno</span></div>
        <div class="lrow"><i class="tw"></i><i class="check yes"></i><i class="sym-fill"></i><span class="bold">terreno</span></div>
        <div class="lrow"><i class="tw d"></i><i class="check yes"></i><svg class="ico"><use href="#group"/></svg><span class="grp">Tablas</span></div>
        <div class="lrow"><i class="tw"></i><i class="check none"></i><svg class="ico"><use href="#tablelayer"/></svg><span class="bold ul">la_nivel</span></div>
        <div class="lrow"><i class="tw r"></i><i class="check yes"></i><svg class="ico"><use href="#group"/></svg><span class="grp">Dominios</span></div>
      </div>
    </section>
  </aside>

  <div class="map">
    <svg class="map-svg">
      <defs>
        <pattern id="dots" width="48" height="48" patternUnits="userSpaceOnUse">
          <path fill="#d3e9d0" d="M2 1h2v1H2zM11 2h1v1h-1zM19 1h2v1h-2zM29 3h1v1h-1zM38 1h2v1h-2zM45 3h1v1h-1zM6 7h1v1H6zM15 6h2v1h-2zM24 8h1v1h-1zM33 7h2v1h-2zM42 8h1v1h-1zM1 12h2v1H1zM10 13h1v1h-1zM20 12h1v1h-1zM28 14h2v1h-2zM37 12h1v1h-1zM46 14h1v1h-1zM5 18h1v1H5zM14 19h2v1h-2zM23 18h1v1h-1zM32 20h1v1h-1zM41 18h2v1h-2zM2 24h1v1H2zM9 25h2v1H9zM18 24h1v1h-1zM27 26h1v1h-1zM36 24h2v1h-2zM45 26h1v1h-1zM6 31h2v1H6zM15 30h1v1h-1zM24 32h2v1h-2zM33 31h1v1h-1zM42 30h1v1h-1zM1 37h1v1H1zM11 36h2v1h-2zM20 38h1v1h-1zM29 36h1v1h-1zM38 38h2v1h-2zM47 36h1v1h-1zM5 43h1v1H5zM14 44h1v1h-1zM23 43h2v1h-2zM33 45h1v1h-1zM42 43h1v1h-1z"/>
          <path fill="#bdf0bd" d="M26 4h2v1h-2zM8 16h1v2H8zM35 22h2v1h-2zM17 34h1v2h-1zM44 40h2v1h-2z"/>
        </pattern>
      </defs>
      <rect y="11" width="100%" height="100%" fill="url(#dots)"/>
      <g class="parcels" transform="scale(.3333 .41582)">
        <path d="M0 38L85 2M210 2l40 43M300 2L250 45 57 205 0 172"/>
        <path d="M57 205l51 53 32 12 28 54 48 20 104 228 220 168 28 12 82 138 62 78 148 137 157 55 98 190 45 60 35 70 27 86"/>
        <path d="M365 2l47 40 73 76 155 215 488-178L960 2M412 42L140 270M485 118L216 344"/>
        <path d="M0 342l130 72 57 168 153 118 36 22 234 281 185 152 303 411M187 582L0 700M340 700L0 872"/>
        <path d="M610 1003L5 1282l250 284M0 1312l225 254M795 1155L427 1400l123 166"/>
        <path d="M568 752l372-92 380-170M940 660l235 146-107 116 149 130 75 15M1175 806l145-88M1217 1052l-200 108M1128 155l192 75"/>
        <path d="M1145 2l140 78 35 30M1235 2l85 53M1292 1067l28 48"/>
      </g>
      <g class="parcels" transform="translate(435 0) scale(.3333 .41582)">
        <path d="M0 100l30 22 52 30 73 26 115 112 80 50 80 65 190 125 175 115 75 23 55 32 45 50 20 55 114 170 73 305 38 60 85 58"/>
        <path d="M0 50l45 30 68 52 72 26 120 120 85 52 70 60 270 180 98 58 72 22 50 28 53 54 17 53 115 175 110 365 55 33"/>
        <path d="M300 2L113 132M82 152L44 241l182 153 129 58 142 106 275 154 332 263M0 225l44 16M0 495l226-101M0 725l78-47 277-226"/>
        <path d="M0 1067h270l502-355M0 1090l213 355 87 121M213 1445l507-60 457-105M720 1385l60 181"/>
      </g>
    </svg>
  </div>

  <aside class="dock right">
    <section class="panel">
      <div class="dock-title"><span>Caja de herramientas de Procesos</span><svg class="dock-btn"><use href="#dockfloat"/></svg><svg class="dock-btn"><use href="#dockclose"/></svg></div>
      <div class="dock-bar proc-bar">
        <b class="tb"><svg class="ico"><use href="#rgear"/></svg></b>
        <b class="tb"><svg class="ico"><use href="#python"/></svg></b>
        <b class="tb"><svg class="ico"><use href="#clock"/></svg></b>
        <b class="tb on"><svg class="ico"><use href="#scroll"/></svg></b>
        <b class="tb"><svg class="ico"><use href="#wrench"/></svg></b>
      </div>
      <div class="search-box"><svg class="ico small"><use href="#search"/></svg><span>Search...</span></div>
      <div class="tree proc-tree">
        <div class="rows">
          <div class="row head"><i class="tw d"></i><span>Usado recientemente</span></div>
          <div class="row alg"><svg class="ico"><use href="#rgear"/></svg><span>ETL-model</span></div>
          <div class="row alg"><svg class="ico"><use href="#rgear"/></svg><span>Overlapping_Boundaries</span></div>
          <div class="row alg"><svg class="ico"><use href="#gear"/></svg><span>Explotar lineas</span></div>
          <div class="row alg"><svg class="ico"><use href="#gear"/></svg><span>Segmentar por ángulo máximo</span></div>
        </div>
        <div class="scrollbar"><i class="up"></i><i class="thumb proc-thumb"></i><i class="rest"></i><i class="down"></i></div>
      </div>
    </section>

    <section class="panel results">
      <div class="dock-title"><span>Visor de resultados</span><svg class="dock-btn"><use href="#dockfloat"/></svg><svg class="dock-btn"><use href="#dockclose"/></svg></div>
      <div class="box box-big"></div>
      <div class="box box-small"></div>
    </section>

    <section class="panel qms">
      <div class="dock-title"><span>Search QMS</span><svg class="dock-btn"><use href="#dockfloat"/></svg><svg class="dock-btn"><use href="#dockclose"/></svg></div>
      <div class="qms-input">Search string…</div>
      <div class="qms-filter"><span class="btn">Filter by extent</span><span class="combo"><span>All</span><u class="drop"></u></span></div>
      <div class="box box-qms"></div>
      <div class="qms-add"><svg class="ico small"><use href="#bell"/></svg><span>Add new services <a href="#">here</a></span></div>
    </section>
  </aside>

</div>

<footer class="status">
  <div class="locator"><svg class="ico small"><use href="#search"/></svg><span>Escriba para localizar (Ctrl+K)</span></div>
  <span class="msg">Eliminadas 3 entradas de la leyenda.</span>
  <span class="lab coord-lab">Coordenada</span>
  <span class="field coord">963632.0,1077543.4</span>
  <svg class="ico st-mouse"><use href="#mouse"/></svg>
  <span class="lab scale-lab">Escala</span>
  <span class="field scale"><span>1:1519</span><svg class="chev" viewBox="0 0 10 6"><path d="M1 1l4 4 4-4" fill="none" stroke="#777"/></svg></span>
  <svg class="ico st-lock"><use href="#lock"/></svg>
  <span class="lab amp-lab">Amplificador</span>
  <span class="field amp"><span>100%</span><em class="spin"></em></span>
  <span class="lab rot-lab">Rotación</span>
  <span class="field rot"><span>0.0 °</span><em class="spin"></em></span>
  <i class="check yes st-check"></i>
  <span class="lab rend-lab">Representar</span>
  <svg class="ico st-crs"><use href="#crs"/></svg>
  <span class="lab crs-lab">EPSG:3116</span>
  <svg class="ico st-chat"><use href="#chat"/></svg>
</footer>

</body>
</html>
```

FILE: styles.css
```css
* {
  box-sizing: border-box;
}

html, body {
  margin: 0;
  height: 802px;
  overflow: hidden;
}

body {
  display: flex;
  flex-direction: column;
  width: 1331px;
  font-family: "Liberation Sans", Arial, sans-serif;
  font-size: 11px;
  letter-spacing: -.12px;
  color: #1a1a1a;
  background: repeating-conic-gradient(#f4f3f3 0 25%, #efefef 0 50%) 0 0 / 2px 2px;
}

.defs {
  position: absolute;
}

.ico {
  width: 18px;
  height: 18px;
  flex: none;
  display: block;
}

.ico.small {
  width: 15px;
  height: 15px;
}

/* text that sits inside icons */
.it {
  font-size: 6px;
  letter-spacing: 0;
  text-anchor: middle;
  fill: #555;
}

.t-11 { font-size: 5.500px; fill: #555; }
.t-t { font-size: 10px; font-weight: 700; fill: #666; }
.t-ab { font-size: 7px; font-weight: 700; fill: #444; }
.t-help { font-size: 10px; font-weight: 700; fill: #e8eef5; }
.t-i { font-size: 12px; font-weight: 700; font-style: italic; fill: #fff; }
.t-eps { font-size: 13px; text-anchor: start; fill: #aaa; }

/* menu */
.menubar {
  height: 22px;
  display: flex;
  align-items: center;
  gap: 15px;
  padding-left: 6px;
  color: #a3a3a3;
  background: #f8f8f8;
}

/* toolbars */
.toolrow {
  display: flex;
  border-bottom: 1px solid #b4b4b4;
  flex: none;
}

.row1 { height: 24px; }
.row2, .row3 { height: 26px; }
.row4 { height: 26px; border-bottom: 0; }

.tgroup {
  display: flex;
  align-items: center;
  height: 100%;
}

.tgroup.line {
  border-right: 1px solid #b4b4b4;
}

.tgroup.pad {
  padding-right: 1px;
}

.grip {
  width: 10px;
  height: 18px;
  flex: none;
  background: radial-gradient(circle, #8f8f8f 0 .8px, transparent 1px) 3px 0 / 3px 3px repeat-y;
}

.grip.tight { width: 8px; background-position: 2px 0; }
.grip.wide { width: 11px; }

.tb {
  width: 23px;
  height: 23px;
  flex: none;
  display: flex;
  align-items: center;
  justify-content: center;
  font-weight: normal;
}

.tb.on {
  background: #bcdcf5;
  outline: 1px solid #8fc4ee;
  outline-offset: -1px;
}

.tb.off .ico {
  filter: grayscale(1);
  opacity: .6;
}

.row3 .tb.off .ico { opacity: .85; }

.drop {
  width: 12px;
  flex: none;
  display: flex;
  align-items: center;
  justify-content: center;
  text-decoration: none;
}

.drop::after {
  content: "";
  border-left: 4px solid transparent;
  border-right: 4px solid transparent;
  border-top: 4px solid #222;
}

.drop.grey::after { border-top-color: #777; }
.drop.pale::after { border-top-color: #a098a0; }

.snap-spin {
  width: 77px;
  height: 18px;
  margin-left: 1px;
  display: flex;
  align-items: center;
  justify-content: space-between;
  padding-left: 3px;
  border: 1px solid #c6d6e2;
  background: #f7f7f7;
  color: #8a8a8a;
  font-size: 12px;
}

.snap-unit {
  width: 59px;
  height: 19px;
  display: flex;
  align-items: center;
  justify-content: space-between;
  padding: 0 3px;
  border: 1px solid #a8a8a8;
  background: repeating-conic-gradient(#c8c8c8 0 25%, #b8b8b8 0 50%) 0 0 / 2px 2px;
  color: #777;
  font-size: 12px;
}

.spin {
  width: 15px;
  height: 100%;
  flex: none;
  position: relative;
  border-left: 1px solid #c4c4c4;
  background: #f2f2f2;
}

.spin::before, .spin::after {
  content: "";
  position: absolute;
  left: 3px;
  border-left: 4px solid transparent;
  border-right: 4px solid transparent;
}

.spin::before { top: 2px; border-bottom: 4px solid #333; }
.spin::after { bottom: 2px; border-top: 4px solid #333; }

.act {
  padding: 0 6.500px;
  color: #111;
}

.act.narrow {
  letter-spacing: -.36px;
}

/* main area */
.main {
  height: 652px;
  display: flex;
  flex: none;
}

.map {
  width: 869px;
  margin-left: 5px;
  margin-right: 4px;
  border: 1px solid #8d9ca0;
  background: #b8d8ba;
  overflow: hidden;
}

.map-svg {
  display: block;
  width: 100%;
  height: 100%;
}

.parcels path {
  fill: none;
  stroke: #9aa898;
  stroke-width: 1;
  vector-effect: non-scaling-stroke;
}

.dock {
  display: flex;
  flex-direction: column;
  flex: none;
  padding-top: 2px;
}

.dock.left { width: 200px; }
.dock.right { width: 253px; }

.panel {
  display: flex;
  flex-direction: column;
}

.dock-title {
  height: 18px;
  flex: none;
  display: flex;
  align-items: center;
  gap: 5px;
  padding: 0 3px 0 2px;
  background: repeating-conic-gradient(#e2e2e2 0 25%, #d9d9d9 0 50%) 0 0 / 2px 2px;
  border-top: 1px solid #e9e9e9;
  color: #222;
}

.right .dock-title { padding-left: 4px; }

.dock-title span {
  flex: 1;
}

.dock-btn {
  width: 11px;
  height: 11px;
  flex: none;
}

.dock-bar {
  height: 28px;
  flex: none;
  display: flex;
  align-items: center;
  gap: 5px;
  padding: 1px 0 0 2px;
}

.tree {
  background: #fbfbfb;
  border: 1px solid #9aa0a4;
  display: flex;
  overflow: hidden;
}

.rows {
  flex: 1;
  padding-top: 1px;
  min-width: 0;
}

.row {
  height: 20px;
  display: flex;
  align-items: center;
  white-space: nowrap;
}

.row > span {
  margin-left: 3px;
}

.tw {
  width: 21px;
  height: 8px;
  flex: none;
  display: block;
  position: relative;
}

.tw.r::after, .tw.d::after {
  content: "";
  position: absolute;
  width: 6px;
  height: 6px;
  border-right: 1.500px solid #9a9a9a;
  border-bottom: 1.500px solid #9a9a9a;
}

.tw.r::after { left: 3px; top: 1px; transform: rotate(-45deg); }
.tw.d::after { left: 5px; top: -1px; transform: rotate(45deg); border-color: #444; }

.nav-tree {
  height: 201px;
  width: 200px;
}

.sub {
  padding-left: 20px;
}

.scrollbar {
  width: 16px;
  flex: none;
  display: flex;
  flex-direction: column;
  background: #f5f5f5;
}

.scrollbar .up, .scrollbar .down {
  height: 17px;
  flex: none;
  position: relative;
}

.scrollbar .up::after, .scrollbar .down::after {
  content: "";
  position: absolute;
  left: 4px;
  width: 6px;
  height: 6px;
  border-left: 1.500px solid #555;
  border-top: 1.500px solid #555;
}

.scrollbar .up::after { top: 7px; transform: rotate(45deg); }
.scrollbar .down::after { top: 3px; transform: rotate(225deg); }

.scrollbar .thumb {
  flex: none;
  background: repeating-conic-gradient(#d6d6d6 0 25%, #c8c8c8 0 50%) 0 0 / 2px 2px;
}

.scrollbar .rest { flex: 1; }

.nav-thumb { height: 67px; }
.proc-thumb { height: 18px; }

.cad {
  margin-top: 6px;
  height: 84px;
}

.cad-msg {
  margin: 3px -3px 0;
  text-align: center;
  line-height: 13px;
  color: #111;
}

.layers {
  flex: 1;
  min-height: 0;
}

.layer-bar .drop { margin-left: -4px; }

.layer-tree {
  flex: 1;
  flex-direction: column;
  padding-top: 1px;
  width: 200px;
  margin-bottom: 1px;
}

.lrow {
  height: 20px;
  display: flex;
  align-items: center;
  flex: none;
}

.lrow .ico { margin-left: 5px; }

.lrow .tw { width: 21px; }
.lrow .tw.d::after { left: 6px; }
.lrow .tw.r::after { left: 5px; }

.check {
  width: 13px;
  height: 13px;
  flex: none;
  position: relative;
  border: 1px solid #333;
  background: #fbfbfb;
  display: block;
}

.check.none {
  visibility: hidden;
}

.check.yes::after {
  content: "";
  position: absolute;
  left: 3px;
  top: 0;
  width: 4px;
  height: 8px;
  border-right: 1.500px solid #333;
  border-bottom: 1.500px solid #333;
  transform: rotate(42deg);
}

.sym-circle {
  width: 14px;
  height: 14px;
  margin: 0 7px 0 6px;
  flex: none;
  border-radius: 50%;
  background: #a9d3ac;
  border: 1px solid #8fb792;
}

.sym-fill {
  width: 16px;
  height: 16px;
  margin: 0 7px 0 5px;
  flex: none;
  background: #b8d8ba;
}

.lrow > .ico + span { margin-left: 4px; }
.lrow > .ico + .ul { margin-left: 5px; }

.dim { color: #b8b8b8; font-weight: 700; font-size: 12px; letter-spacing: .1px; }
.bold { font-weight: 700; font-size: 12px; letter-spacing: .1px; color: #000; }
.ul { text-decoration: underline; }

.search-box {
  height: 19px;
  flex: none;
  display: flex;
  align-items: center;
  gap: 5px;
  padding-left: 6px;
  border: 1px solid #9aa0a4;
  border-bottom-width: 2px;
  color: #999;
  background: #fbfbfb;
}

.proc-bar {
  gap: 0;
  padding-left: 1px;
}

.proc-tree {
  height: 93px;
  border-top: 0;
}

.proc-tree .rows {
  padding-top: 0;
}

.proc-tree .head {
  height: 18px;
  padding: 1px 0 0 7px;
}

.proc-tree .head .tw { width: 12px; }
.proc-tree .head .tw::after { left: 0; }

.alg {
  padding-left: 43px;
}

.results {
  margin-top: 7px;
}

.box {
  background: #fbfbfb;
  border: 1px solid #9aa0a4;
  flex: none;
}

.box-big {
  height: 191px;
  margin-top: 2px;
}

.box-small {
  height: 73px;
  margin-top: 6px;
}

.qms {
  margin-top: 6px;
}

.qms-input {
  height: 19px;
  margin-top: 3px;
  padding: 3px 2px;
  color: #8e8e8e;
  background: #fbfbfb;
  border: 1px solid #9aa0a4;
}

.qms-filter {
  display: flex;
  align-items: center;
  margin-top: 6px;
  padding-left: 100px;
  gap: 7px;
}

.btn {
  width: 80px;
  height: 21px;
  display: flex;
  align-items: center;
  justify-content: center;
  border: 1px solid #aaa;
  background: repeating-conic-gradient(#e6e6e6 0 25%, #dcdcdc 0 50%) 0 0 / 2px 2px;
  color: #111;
}

.combo {
  flex: 1;
  height: 20px;
  display: flex;
  align-items: center;
  justify-content: space-between;
  padding-left: 3px;
  border: 1px solid #b4b4b4;
  background: repeating-conic-gradient(#dfdfdf 0 25%, #d5d5d5 0 50%) 0 0 / 2px 2px;
}

.box-qms {
  height: 74px;
  margin-top: 7px;
}

.qms-add {
  display: flex;
  align-items: center;
  justify-content: center;
  gap: 3px;
  margin-top: 15px;
}

.qms-add a {
  color: #0000ee;
}

/* status bar */
.status {
  height: 26px;
  flex: none;
  display: flex;
  align-items: center;
  padding: 2px 0 0 2px;
  white-space: nowrap;
}

.locator {
  width: 227px;
  height: 19px;
  flex: none;
  display: flex;
  align-items: center;
  gap: 6px;
  padding-left: 6px;
  border: 1px solid #a8a8a8;
  color: #8c8c8c;
  background: #f8f8f8;
}

.msg {
  margin-left: 7px;
  width: 233px;
  flex: none;
}

.lab {
  flex: none;
}

.field {
  height: 19px;
  flex: none;
  display: flex;
  align-items: center;
  justify-content: space-between;
  padding-left: 3px;
  border: 1px solid #777;
  background: #fbfbfb;
  color: #111;
}

.coord-lab { width: 63px; }
.coord { width: 110px; padding-left: 2px; letter-spacing: .2px; overflow: hidden; }
.st-mouse { margin-left: 4px; }
.scale-lab { width: 34px; margin-left: 11px; }
.scale { width: 78px; padding-right: 6px; }
.chev { width: 10px; height: 6px; }
.st-lock { margin-left: 2px; }
.amp-lab { width: 62px; margin-left: 11px; }
.amp { width: 82px; }
.rot-lab { width: 43px; margin-left: 8px; }
.rot { width: 79px; margin-left: 9px; }
.st-check { margin-left: 7px; }
.rend-lab { width: 68px; margin-left: 4px; }
.st-crs { margin-left: 9px; margin-right: 2px; }
.crs-lab { width: 56px; }
.st-chat { margin-left: 13px; }
```
